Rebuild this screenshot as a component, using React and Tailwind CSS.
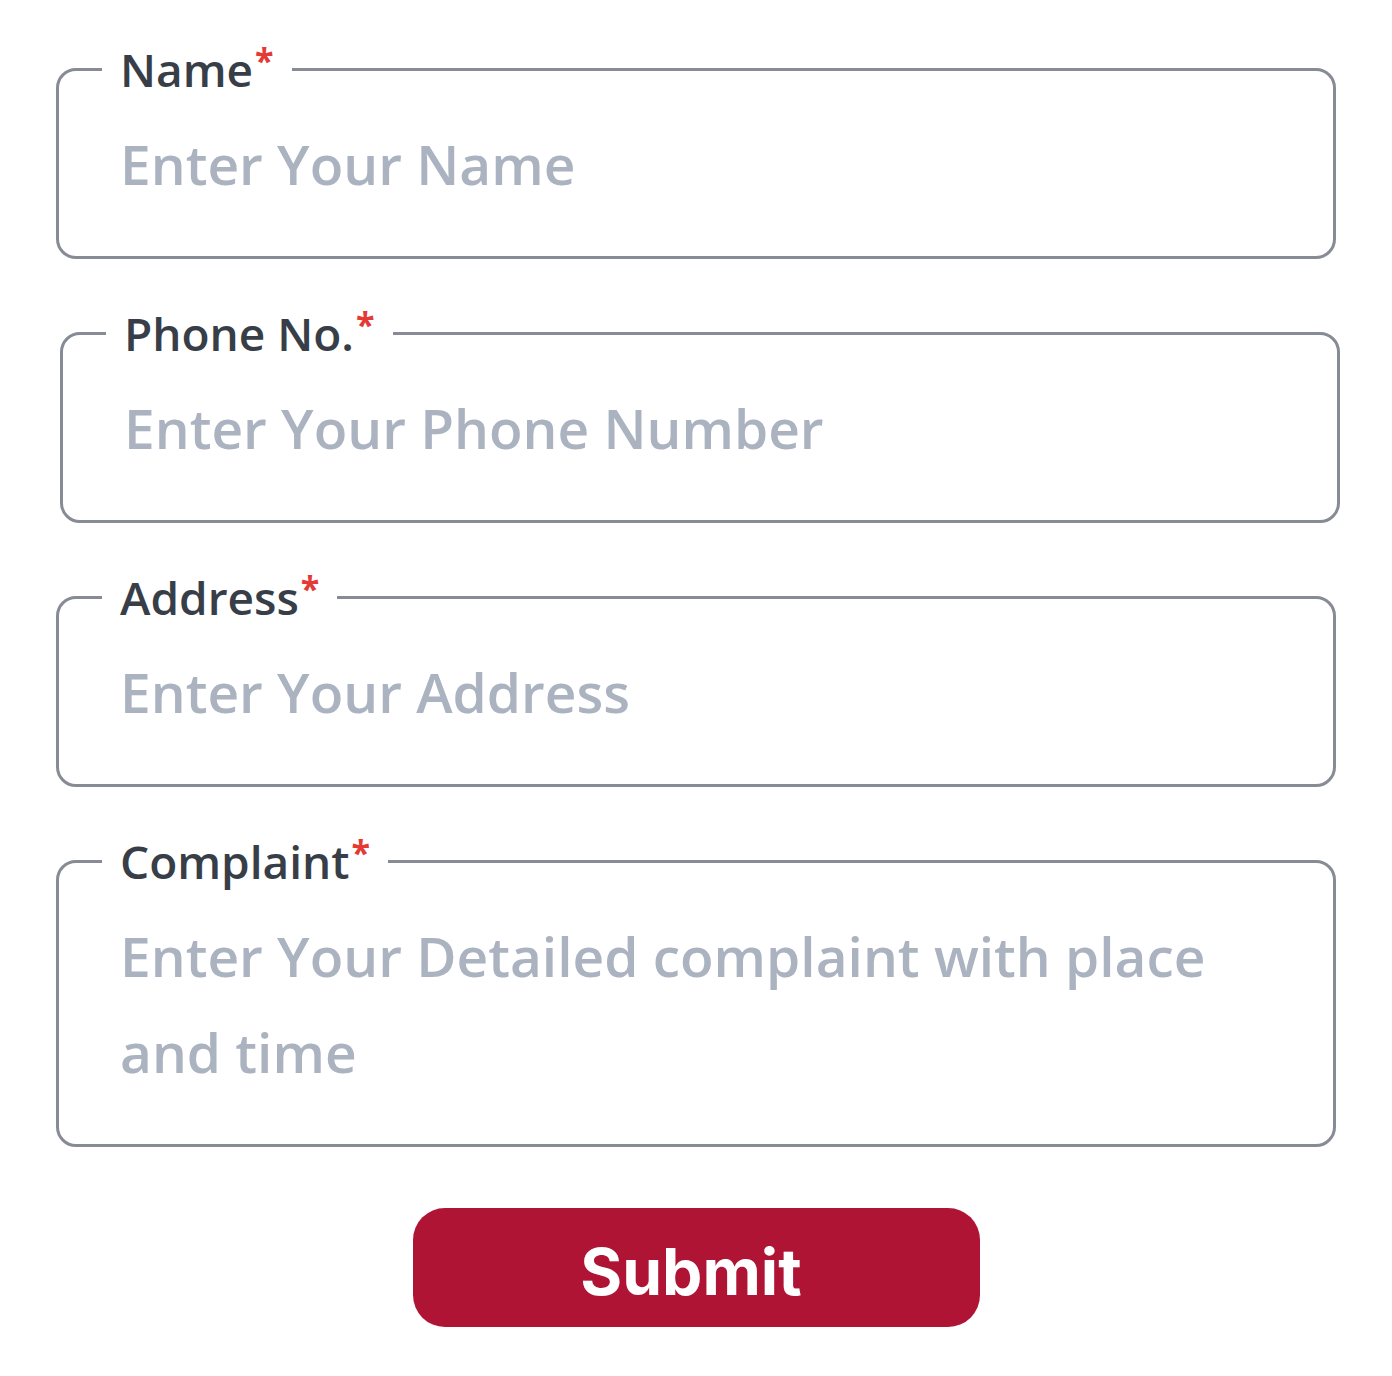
import { useState } from "react";

const fieldSans = { fontFamily: '"Open Sans", "Noto Sans", sans-serif' };

function Field({ label, placeholder, shift = false, multiline = false }) {
  const [value, setValue] = useState("");
  const inputCls =
    "mt-[12px] block w-full bg-transparent pl-[18px] text-[55px] font-semibold leading-[96px] text-gray-700 outline-none placeholder:text-[#abb3c1]";

  return (
    <fieldset
      className={`rounded-[20px] border-[3px] border-[#878c94] pb-[44px] pl-[43px] pr-[43px] ${
        shift ? "ml-[60px] mr-[52px]" : "ml-[56px] mr-[56px]"
      }`}
      style={fieldSans}
    >
      <legend className="px-[18px] text-[46px] font-semibold leading-[69px] text-[#373e48]">
        {label}
        <span className="ml-[2px] align-top text-[34px] font-bold leading-[50px] text-[#e53935]">*</span>
      </legend>
      {multiline ? (
        <textarea
          rows={2}
          value={value}
          onChange={(e) => setValue(e.target.value)}
          placeholder={placeholder}
          className={`${inputCls} h-[192px] resize-none overflow-hidden`}
        />
      ) : (
        <input
          value={value}
          onChange={(e) => setValue(e.target.value)}
          placeholder={placeholder}
          className={`${inputCls} h-[96px]`}
        />
      )}
    </fieldset>
  );
}

export default function App() {
  return (
    <div className="min-h-[1376px] w-full bg-white pt-[35px]">
      <form className="flex flex-col gap-[40px]" onSubmit={(e) => e.preventDefault()}>
        <Field label="Name" placeholder="Enter Your Name" />
        <Field label="Phone No." placeholder="Enter Your Phone Number" shift />
        <Field label="Address" placeholder="Enter Your Address" />
        <Field
          label="Complaint"
          placeholder="Enter Your Detailed complaint with place and time"
          multiline
        />
        <div className="mt-[21px] flex justify-center">
          <button
            type="submit"
            className="flex h-[119px] w-[567px] items-center justify-center rounded-[32px] bg-[#b01434] pr-[10px] pt-[8px] text-[64px] font-bold text-white"
            style={{ fontFamily: "Inter, Roboto, sans-serif" }}
          >
            Submit
          </button>
        </div>
      </form>
    </div>
  );
}
